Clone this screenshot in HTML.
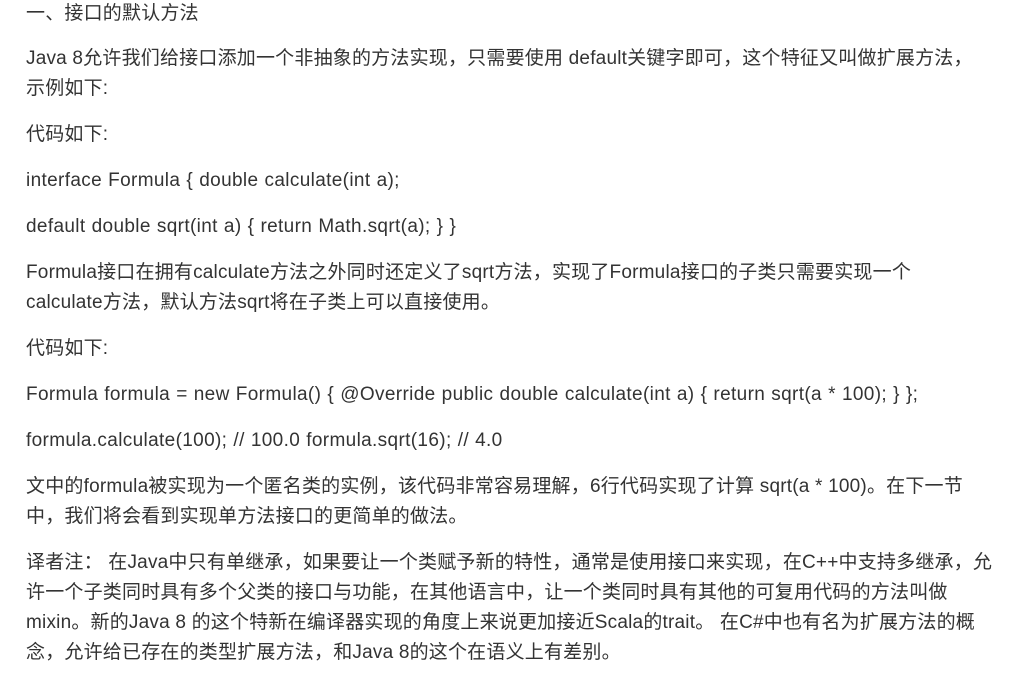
<!DOCTYPE html>
<html><head><meta charset="utf-8"><style>
html,body{margin:0;padding:0;background:#fff;width:1028px;height:689px;overflow:hidden}
body{font-family:"Liberation Sans","Noto Sans CJK SC",sans-serif;font-size:19px;color:#333}
.l{position:absolute;left:26px;white-space:nowrap;line-height:30px;height:30px;letter-spacing:0.2px}
.c{letter-spacing:0.35px;word-spacing:0.5px}
</style></head><body>
<div class="l" style="top:-1px">一、接口的默认方法</div>
<div class="l" style="top:44px">Java 8允许我们给接口添加一个非抽象的方法实现，只需要使用 default关键字即可，这个特征又叫做扩展方法，</div>
<div class="l" style="top:74px">示例如下:</div>
<div class="l" style="top:120px">代码如下:</div>
<div class="l c" style="top:166px">interface Formula { double calculate(int a);</div>
<div class="l c" style="top:212px">default double sqrt(int a) { return Math.sqrt(a); } }</div>
<div class="l" style="top:258px">Formula接口在拥有calculate方法之外同时还定义了sqrt方法，实现了Formula接口的子类只需要实现一个</div>
<div class="l" style="top:288px">calculate方法，默认方法sqrt将在子类上可以直接使用。</div>
<div class="l" style="top:334px">代码如下:</div>
<div class="l c" style="top:380px">Formula formula = new Formula() { @Override public double calculate(int a) { return sqrt(a * 100); } };</div>
<div class="l c" style="top:426px">formula.calculate(100); // 100.0 formula.sqrt(16); // 4.0</div>
<div class="l" style="top:472px">文中的formula被实现为一个匿名类的实例，该代码非常容易理解，6行代码实现了计算 sqrt(a * 100)。在下一节</div>
<div class="l" style="top:502px">中，我们将会看到实现单方法接口的更简单的做法。</div>
<div class="l" style="top:548px">译者注： 在Java中只有单继承，如果要让一个类赋予新的特性，通常是使用接口来实现，在C++中支持多继承，允</div>
<div class="l" style="top:578px">许一个子类同时具有多个父类的接口与功能，在其他语言中，让一个类同时具有其他的可复用代码的方法叫做</div>
<div class="l" style="top:608px">mixin。新的Java 8 的这个特新在编译器实现的角度上来说更加接近Scala的trait。 在C#中也有名为扩展方法的概</div>
<div class="l" style="top:638px">念，允许给已存在的类型扩展方法，和Java 8的这个在语义上有差别。</div>
</body></html>
